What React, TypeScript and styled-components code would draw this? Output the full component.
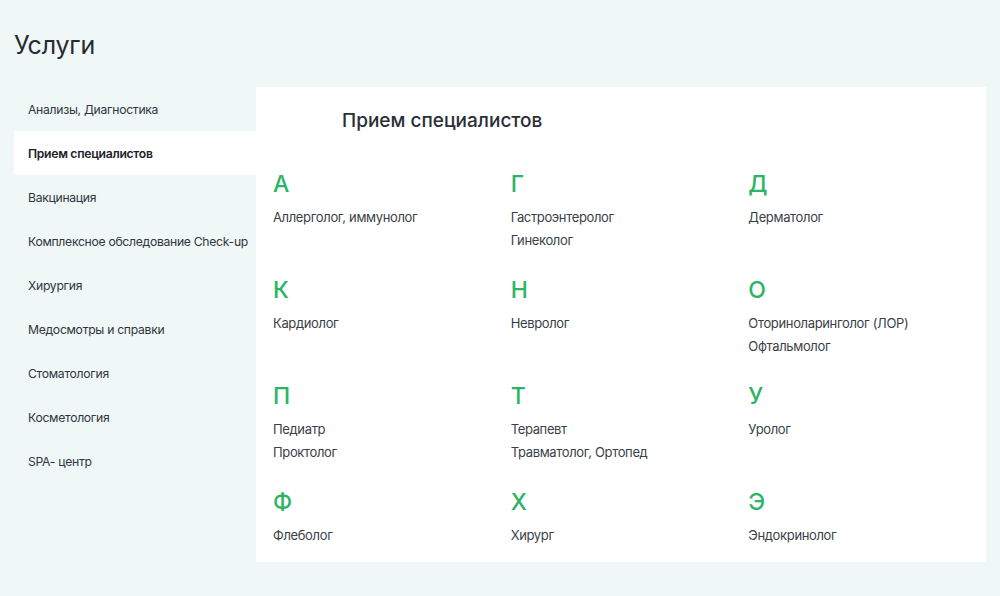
import styled, { createGlobalStyle } from "styled-components";

const GlobalStyle = createGlobalStyle`
  html, body {
    margin: 0;
    padding: 0;
    background: #eff8f7;
    font-family: Inter, "Noto Sans", sans-serif;
    color: #2c3038;
  }
`;

const Page = styled.div`
  padding: 0 14px;
  min-height: 596px;
  box-sizing: border-box;
`;

const PageTitle = styled.h1`
  margin: 0;
  height: 87px;
  padding-top: 28px;
  box-sizing: border-box;
  font-size: 25px;
  line-height: 34px;
  font-weight: 400;
  letter-spacing: -0.2px;
  color: #262b34;
`;

const Layout = styled.div`
  display: flex;
  align-items: flex-start;
`;

const Sidebar = styled.nav`
  width: 242px;
  flex-shrink: 0;
  display: flex;
  flex-direction: column;
`;

const NavItem = styled.div<{ $active?: boolean }>`
  height: 44px;
  display: flex;
  align-items: center;
  padding-left: 14px;
  font-size: 12.2px;
  letter-spacing: -0.3px;
  white-space: nowrap;
  font-weight: ${({ $active }) => ($active ? 600 : 400)};
  color: ${({ $active }) => ($active ? "#1d2129" : "#30353d")};
  background: ${({ $active }) => ($active ? "#ffffff" : "transparent")};
`;

const Panel = styled.section`
  flex: 1;
  background: #ffffff;
  padding: 20px 0 15px 17px;
`;

const PanelTitle = styled.h2`
  margin: 0 0 34px 69px;
  font-size: 19px;
  line-height: 28px;
  font-weight: 500;
  color: #2a2e35;
`;

const Grid = styled.div`
  display: grid;
  grid-template-columns: repeat(3, 1fr);
  row-gap: 23px;
`;

const Group = styled.div`
  display: flex;
  flex-direction: column;
`;

const Letter = styled.div`
  font-size: 23px;
  line-height: 30px;
  font-weight: 500;
  color: #2bb565;
  margin-bottom: 7px;
`;

const Item = styled.div`
  font-size: 13px;
  line-height: 23px;
  letter-spacing: -0.35px;
  color: #3a3f47;
`;

const menu = [
  "Анализы, Диагностика",
  "Прием специалистов",
  "Вакцинация",
  "Комплексное обследование Check-up",
  "Хирургия",
  "Медосмотры и справки",
  "Стоматология",
  "Косметология",
  "SPA- центр",
];

const groups: { letter: string; items: string[] }[] = [
  { letter: "А", items: ["Аллерголог, иммунолог"] },
  { letter: "Г", items: ["Гастроэнтеролог", "Гинеколог"] },
  { letter: "Д", items: ["Дерматолог"] },
  { letter: "К", items: ["Кардиолог"] },
  { letter: "Н", items: ["Невролог"] },
  { letter: "О", items: ["Оториноларинголог (ЛОР)", "Офтальмолог"] },
  { letter: "П", items: ["Педиатр", "Проктолог"] },
  { letter: "Т", items: ["Терапевт", "Травматолог, Ортопед"] },
  { letter: "У", items: ["Уролог"] },
  { letter: "Ф", items: ["Флеболог"] },
  { letter: "Х", items: ["Хирург"] },
  { letter: "Э", items: ["Эндокринолог"] },
];

export default function App() {
  return (
    <Page>
      <GlobalStyle />
      <PageTitle>Услуги</PageTitle>
      <Layout>
        <Sidebar>
          {menu.map((m, i) => (
            <NavItem key={m} $active={i === 1}>
              {m}
            </NavItem>
          ))}
        </Sidebar>
        <Panel>
          <PanelTitle>Прием специалистов</PanelTitle>
          <Grid>
            {groups.map((g) => (
              <Group key={g.letter}>
                <Letter>{g.letter}</Letter>
                {g.items.map((it) => (
                  <Item key={it}>{it}</Item>
                ))}
              </Group>
            ))}
          </Grid>
        </Panel>
      </Layout>
    </Page>
  );
}
